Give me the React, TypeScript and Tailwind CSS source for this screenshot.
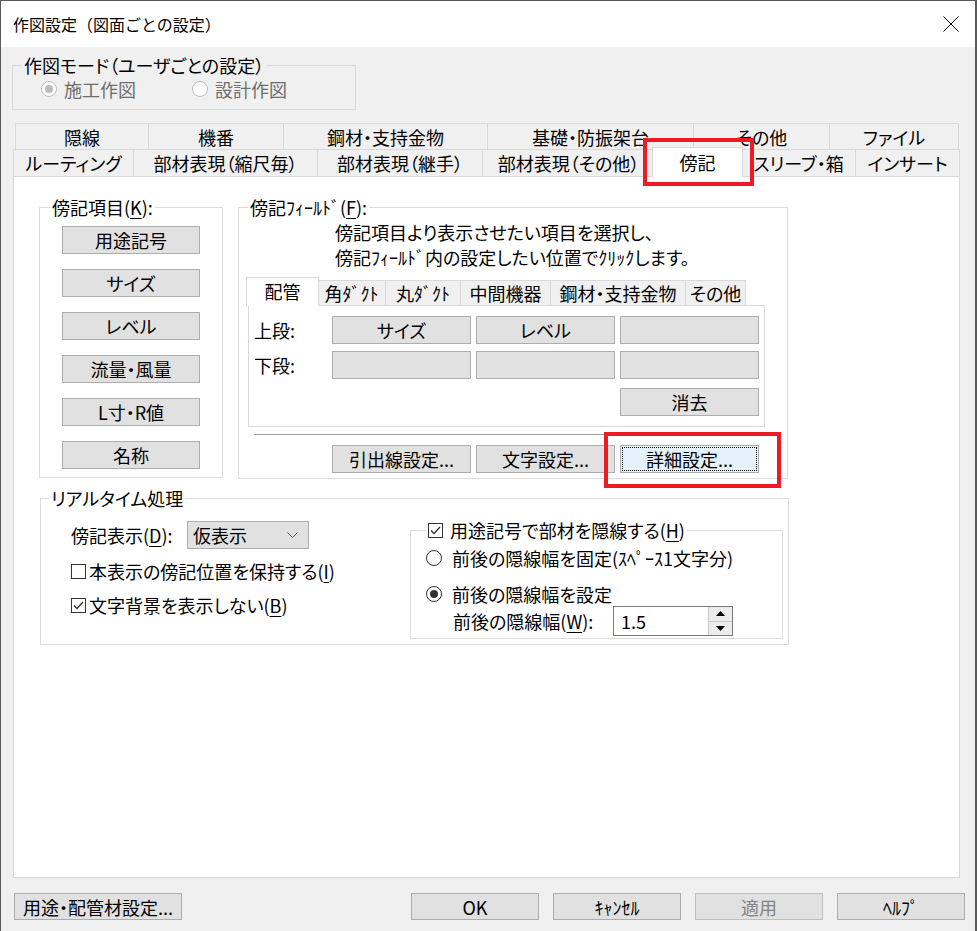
import React from "react";

const FONT = "font-['Noto_Sans_CJK_JP','Noto_Sans',sans-serif]";

function U({ children }: { children: React.ReactNode }) {
  return <span className="underline underline-offset-[3px] decoration-1">{children}</span>;
}

function Btn({ children, className = "" }: { children?: React.ReactNode; className?: string }) {
  return (
    <div className={`flex items-center justify-center border border-[#adadad] bg-[#e1e1e1] ${className}`}>
      {children}
    </div>
  );
}

function Radio({ checked = false, disabled = false }: { checked?: boolean; disabled?: boolean }) {
  return (
    <span
      className={`flex h-[16px] w-[16px] shrink-0 items-center justify-center rounded-full border bg-white ${
        disabled ? "border-[#bcbcbc]" : "border-[#333333]"
      }`}
    >
      {checked && (
        <span className={`h-[8px] w-[8px] rounded-full ${disabled ? "bg-[#bcbcbc]" : "bg-[#333333]"}`} />
      )}
    </span>
  );
}

function Check({ checked = false }: { checked?: boolean }) {
  return (
    <span className="flex h-[15px] w-[15px] shrink-0 items-center justify-center border border-[#333333] bg-white">
      {checked && (
        <svg width="13" height="13" viewBox="0 0 13 13">
          <path d="M2 6.5 L5 9.5 L11 3" fill="none" stroke="#333333" strokeWidth="1.3" />
        </svg>
      )}
    </span>
  );
}

const row1 = [
  { label: "隠線", w: "w-[133px]" },
  { label: "機番", w: "w-[135px]" },
  { label: "鋼材・支持金物", w: "w-[204px]" },
  { label: "基礎・防振架台", w: "w-[206px]" },
  { label: "その他", w: "w-[136px]" },
  { label: "ファイル", w: "w-[130px]" },
];

const row2 = [
  { label: "ルーティング", w: "w-[120px]" },
  { label: "部材表現（縮尺毎）", w: "w-[184px]" },
  { label: "部材表現（継手）", w: "w-[165px]" },
  { label: "部材表現（その他）", w: "w-[172px]" },
  { label: "傍記", w: "w-[91px]", sel: true },
  { label: "スリーブ・箱", w: "w-[114px]" },
  { label: "インサート", w: "w-[105px]" },
];

const innerTabs = [
  { label: "配管", w: "w-[73px]", sel: true },
  { label: "角ﾀﾞｸﾄ", w: "w-[68px]" },
  { label: "丸ﾀﾞｸﾄ", w: "w-[75px]" },
  { label: "中間機器", w: "w-[90px]" },
  { label: "鋼材・支持金物", w: "w-[135px]" },
  { label: "その他", w: "w-[61px]" },
];

const items = ["用途記号", "サイズ", "レベル", "流量・風量", "L寸・R値", "名称"];

export default function App() {
  return (
    <div
      className={`relative flex h-[931px] w-[977px] flex-col overflow-hidden border-l border-r-2 border-t border-[#5a5a5a] bg-[#f0f0f0] text-black ${FONT}`}
    >
      {/* Title bar */}
      <div className="flex h-[46px] shrink-0 items-center bg-white pl-[12px] text-[16px] leading-[20px]">
        <span>作図設定（図面ごとの設定）</span>
        <div className="flex-1" />
        <svg width="16" height="16" viewBox="0 0 16 16" className="mr-[16px]">
          <path d="M0.5 0.5 L15.5 15.5 M15.5 0.5 L0.5 15.5" stroke="#000" strokeWidth="1" fill="none" />
        </svg>
      </div>

      {/* Body */}
      <div className="flex flex-col pl-[11px] text-[18px] leading-[20px] [font-feature-settings:'palt']">
        {/* Mode group */}
        <fieldset className="mt-[8px] h-[55px] w-[344px] border border-[#dcdcdc]">
          <legend className="ml-[9px] px-[2px]">作図モード（ユーザごとの設定）</legend>
          <div className="flex h-[28px] items-center pl-[28px] text-[#6d6d6d]">
            <div className="flex w-[151px] items-center gap-[7px]">
              <Radio checked disabled />
              <span>施工作図</span>
            </div>
            <div className="flex items-center gap-[7px]">
              <Radio disabled />
              <span>設計作図</span>
            </div>
          </div>
        </fieldset>

        {/* Tab rows */}
        <div className="ml-[3px] mt-[13px] flex h-[26px]">
          {row1.map((t, i) => (
            <div
              key={t.label}
              className={`flex h-full items-center justify-center border-l border-t border-[#d9d9d9] bg-[#f0f0f0] ${t.w} ${
                i === row1.length - 1 ? "border-r" : ""
              }`}
            >
              {t.label}
            </div>
          ))}
        </div>
        <div className="ml-[1px] flex h-[27px] items-end">
          {row2.map((t, i) =>
            t.sel ? (
              <div
                key={t.label}
                className={`relative z-10 -mx-[2px] -mb-[1px] flex h-[30px] items-center justify-center border-x border-t border-[#d9d9d9] bg-white pb-[1px] ${t.w}`}
              >
                {t.label}
              </div>
            ) : (
              <div
                key={t.label}
                className={`flex h-[27px] items-center justify-center border-l border-t border-[#d9d9d9] bg-[#f0f0f0] ${t.w} ${
                  i === row2.length - 1 ? "border-r" : ""
                }`}
              >
                {t.label}
              </div>
            )
          )}
        </div>

        {/* Panel */}
        <div className="ml-[1px] flex h-[702px] w-[947px] flex-col border border-[#d9d9d9] bg-white pl-[25px] pt-[20px]">
          <div className="flex gap-[15px]">
            {/* 傍記項目 */}
            <fieldset className="h-[281px] w-[184px] border border-[#dcdcdc]">
              <legend className="ml-[10px] px-[2px]">
                傍記項目(<U>K</U>):
              </legend>
              <div className="mt-[9px] flex flex-col gap-[15px] pl-[22px]">
                {items.map((it) => (
                  <Btn key={it} className="h-[28px] w-[138px]">
                    {it}
                  </Btn>
                ))}
              </div>
            </fieldset>

            {/* 傍記フィールド */}
            <fieldset className="h-[282px] w-[550px] border border-[#dcdcdc]">
              <legend className="ml-[9px] px-[2px]">
                傍記ﾌｨｰﾙﾄﾞ(<U>F</U>):
              </legend>
              <div className="mt-[3px] pl-[96px] leading-[25px]">
                <div>傍記項目より表示させたい項目を選択し、</div>
                <div>傍記ﾌｨｰﾙﾄﾞ内の設定したい位置でｸﾘｯｸします。</div>
              </div>
              <div className="ml-[9px] mt-[10px] flex h-[25px] items-end">
                {innerTabs.map((t, i) =>
                  t.sel ? (
                    <div
                      key={t.label}
                      className={`relative z-10 -mx-[2px] -mb-[1px] flex h-[29px] items-center justify-center border-x border-t border-[#d9d9d9] bg-white pb-[2px] ${t.w}`}
                    >
                      {t.label}
                    </div>
                  ) : (
                    <div
                      key={t.label}
                      className={`flex h-[25px] items-center justify-center border-l border-t border-[#d9d9d9] bg-[#f0f0f0] ${t.w} ${
                        i === innerTabs.length - 1 ? "border-r" : ""
                      }`}
                    >
                      {t.label}
                    </div>
                  )
                )}
              </div>
              <div className="ml-[9px] flex h-[122px] w-[517px] flex-col border border-[#d9d9d9] bg-white pl-[5px] pt-[10px]">
                <div className="flex h-[28px] items-center">
                  <span className="w-[78px]">上段:</span>
                  <div className="flex gap-[5px]">
                    <Btn className="h-[28px] w-[139px]">サイズ</Btn>
                    <Btn className="h-[28px] w-[139px]">レベル</Btn>
                    <Btn className="h-[28px] w-[139px]" />
                  </div>
                </div>
                <div className="mt-[7px] flex h-[28px] items-center">
                  <span className="w-[78px]">下段:</span>
                  <div className="flex gap-[5px]">
                    <Btn className="h-[28px] w-[139px]" />
                    <Btn className="h-[28px] w-[139px]" />
                    <Btn className="h-[28px] w-[139px]" />
                  </div>
                </div>
                <div className="mt-[9px] flex h-[28px] justify-end pr-[5px]">
                  <Btn className="h-[28px] w-[139px]">消去</Btn>
                </div>
              </div>
              <div className="ml-[15px] mt-[7px] h-[2px] w-[509px] border-t border-[#a0a0a0] border-b-white" />
              <div className="mt-[9px] flex gap-[5px] pl-[93px]">
                <Btn className="h-[28px] w-[139px]">引出線設定...</Btn>
                <Btn className="h-[28px] w-[139px]">文字設定...</Btn>
                <Btn className="h-[28px] w-[139px] border-[#0078d7] bg-[#e5f1fb] outline-1 -outline-offset-[3px] outline-dotted outline-black">
                  詳細設定...
                </Btn>
              </div>
            </fieldset>
          </div>

          {/* リアルタイム処理 */}
          <fieldset className="ml-[1px] mt-[9px] h-[157px] w-[749px] border border-[#dcdcdc]">
            <legend className="ml-[8px] px-[2px]">リアルタイム処理</legend>
            <div className="flex">
              <div className="flex w-[369px] flex-col pl-[30px] pt-[13px]">
                <div className="flex h-[28px] items-center">
                  <span className="w-[116px]">
                    傍記表示(<U>D</U>):
                  </span>
                  <div className="flex h-[28px] w-[122px] items-center justify-between border border-[#adadad] bg-[#e1e1e1] pl-[5px] pr-[10px]">
                    <span>仮表示</span>
                    <svg width="11" height="7" viewBox="0 0 11 7">
                      <path d="M0.5 0.5 L5.5 5.5 L10.5 0.5" fill="none" stroke="#555" strokeWidth="1" />
                    </svg>
                  </div>
                </div>
                <div className="mt-[10px] flex h-[24px] items-center gap-[3px]">
                  <Check />
                  <span>
                    本表示の傍記位置を保持する(<U>I</U>)
                  </span>
                </div>
                <div className="mt-[10px] flex h-[24px] items-center gap-[3px]">
                  <Check checked />
                  <span>
                    文字背景を表示しない(<U>B</U>)
                  </span>
                </div>
              </div>
              <fieldset className="mt-[12px] h-[119px] w-[373px] border border-[#dcdcdc]">
                <legend className="ml-[15px] flex items-center gap-[7px] px-[2px]">
                  <Check checked />
                  <span>
                    用途記号で部材を隠線する(<U>H</U>)
                  </span>
                </legend>
                <div className="flex flex-col pl-[15px]">
                  <div className="mt-[8px] flex h-[20px] items-center gap-[10px]">
                    <Radio />
                    <span>前後の隠線幅を固定(ｽﾍﾟｰｽ1文字分)</span>
                  </div>
                  <div className="mt-[16px] flex h-[20px] items-center gap-[10px]">
                    <Radio checked />
                    <span>前後の隠線幅を設定</span>
                  </div>
                  <div className="mt-[2px] flex h-[30px] items-center pl-[27px]">
                    <span className="w-[160px]">
                      前後の隠線幅(<U>W</U>):
                    </span>
                    <div className="flex h-[30px] w-[120px] border border-[#7a7a7a] bg-white">
                      <span className="flex flex-1 items-center pl-[7px]">1.5</span>
                      <div className="flex w-[24px] flex-col border-l border-[#c8c8c8]">
                        <div className="flex flex-1 items-center justify-center border-b border-[#c8c8c8] bg-[#ececec]">
                          <svg width="9" height="5" viewBox="0 0 9 5">
                            <path d="M4.5 0 L9 5 L0 5 Z" fill="#000" />
                          </svg>
                        </div>
                        <div className="flex flex-1 items-center justify-center bg-[#ececec]">
                          <svg width="9" height="5" viewBox="0 0 9 5">
                            <path d="M0 0 L9 0 L4.5 5 Z" fill="#000" />
                          </svg>
                        </div>
                      </div>
                    </div>
                  </div>
                </div>
              </fieldset>
            </div>
          </fieldset>
        </div>

        {/* Bottom buttons */}
        <div className="mt-[15px] flex pl-[2px]">
          <Btn className="h-[27px] w-[168px]">用途・配管材設定...</Btn>
          <div className="ml-[229px] flex gap-[14px]">
            <Btn className="h-[27px] w-[128px]">OK</Btn>
            <Btn className="h-[27px] w-[128px]">ｷｬﾝｾﾙ</Btn>
            <Btn className="h-[27px] w-[128px] border-[#bfbfbf] bg-[#cccccc] text-[#838383]">適用</Btn>
            <Btn className="h-[27px] w-[128px]">ﾍﾙﾌﾟ</Btn>
          </div>
        </div>
      </div>

      {/* Red annotation boxes */}
      <div className="pointer-events-none absolute left-[642px] top-[137px] h-[48px] w-[111px] border-4 border-[#ed1c24]" />
      <div className="pointer-events-none absolute left-[603px] top-[431px] h-[56px] w-[177px] border-4 border-[#ed1c24]" />
    </div>
  );
}
